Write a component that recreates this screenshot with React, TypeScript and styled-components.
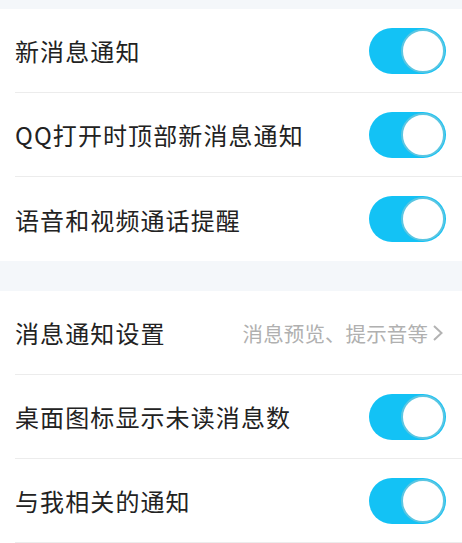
import React from "react";
import styled, { createGlobalStyle } from "styled-components";

const Global = createGlobalStyle`
  html, body { margin: 0; padding: 0; background: #ffffff; }
  body { font-family: "Noto Sans CJK SC", "Noto Sans", sans-serif; }
`;

const Page = styled.div`
  width: 462px;
  background: #f4f7fa;
  padding-top: 9px;
`;

const Group = styled.div<{ $gap?: number }>`
  background: #ffffff;
  margin-bottom: ${(p) => p.$gap ?? 0}px;
`;

const Row = styled.div<{ $last?: boolean }>`
  height: 84px;
  box-sizing: border-box;
  margin-left: 15px;
  padding-right: 16px;
  display: flex;
  align-items: center;
  justify-content: space-between;
  border-bottom: ${(p) => (p.$last ? "none" : "1px solid #ececec")};
`;

const Label = styled.span`
  font-size: 24px;
  color: #222222;
  letter-spacing: 1.1px;
`;

const Track = styled.div`
  width: 77px;
  height: 46px;
  border-radius: 23px;
  background: #13c2f5;
  display: flex;
  align-items: center;
  justify-content: flex-end;
  box-sizing: border-box;
  padding-right: 1px;
`;

const Knob = styled.div`
  width: 44px;
  height: 44px;
  border-radius: 50%;
  background: #ffffff;
  box-sizing: border-box;
  border: 2px solid #5bc6e2;
`;

const Detail = styled.div`
  display: flex;
  align-items: center;
  gap: 4px;
  color: #b0b0b0;
  font-size: 20.5px;
  letter-spacing: 0.1px;
  margin-right: 2px;
`;

const Switch = () => (
  <Track>
    <Knob />
  </Track>
);

const Chevron = () => (
  <svg width="12" height="18" viewBox="0 0 12 18" fill="none">
    <path d="M2 2 L9.5 9 L2 16" stroke="#b3b3b3" strokeWidth="2" />
  </svg>
);

export default function App() {
  return (
    <>
      <Global />
      <Page>
        <Group $gap={30}>
          <Row>
            <Label>新消息通知</Label>
            <Switch />
          </Row>
          <Row>
            <Label>QQ打开时顶部新消息通知</Label>
            <Switch />
          </Row>
          <Row $last>
            <Label>语音和视频通话提醒</Label>
            <Switch />
          </Row>
        </Group>
        <Group>
          <Row>
            <Label>消息通知设置</Label>
            <Detail>
              消息预览、提示音等
              <Chevron />
            </Detail>
          </Row>
          <Row>
            <Label>桌面图标显示未读消息数</Label>
            <Switch />
          </Row>
          <Row>
            <Label>与我相关的通知</Label>
            <Switch />
          </Row>
        </Group>
      </Page>
    </>
  );
}
